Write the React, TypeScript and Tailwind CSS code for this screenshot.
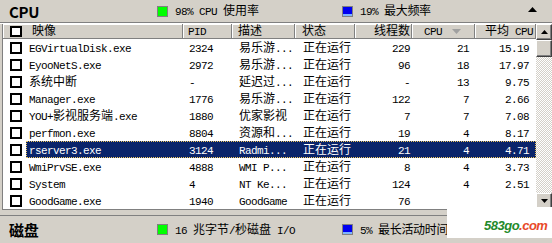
import React from 'react';

type Proc = {
  name: string;
  pid: string;
  desc: string;
  status: string;
  threads: string;
  cpu: string;
  avg: string;
  selected?: boolean;
};

const processes: Proc[] = [
  { name: 'EGVirtualDisk.exe', pid: '2324', desc: '易乐游...', status: '正在运行', threads: '229', cpu: '21', avg: '15.19' },
  { name: 'EyooNetS.exe', pid: '2972', desc: '易乐游...', status: '正在运行', threads: '96', cpu: '18', avg: '17.97' },
  { name: '系统中断', pid: '-', desc: '延迟过...', status: '正在运行', threads: '-', cpu: '13', avg: '9.75' },
  { name: 'Manager.exe', pid: '1776', desc: '易乐游...', status: '正在运行', threads: '122', cpu: '7', avg: '2.66' },
  { name: 'YOU+影视服务端.exe', pid: '1880', desc: '优家影视', status: '正在运行', threads: '7', cpu: '7', avg: '7.08' },
  { name: 'perfmon.exe', pid: '8804', desc: '资源和...', status: '正在运行', threads: '19', cpu: '4', avg: '8.17' },
  { name: 'rserver3.exe', pid: '3124', desc: 'Radmi...', status: '正在运行', threads: '21', cpu: '4', avg: '4.71', selected: true },
  { name: 'WmiPrvSE.exe', pid: '4888', desc: 'WMI P...', status: '正在运行', threads: '8', cpu: '4', avg: '3.73' },
  { name: 'System', pid: '4', desc: 'NT Ke...', status: '正在运行', threads: '124', cpu: '4', avg: '2.51' },
  { name: 'GoodGame.exe', pid: '1940', desc: 'GoodGame', status: '正在运行', threads: '76', cpu: '3', avg: '1.92' },
];

const CJK = /([\u2e80-\u9fff\uff00-\uffef]+)/;

// SimSun-like mix: latin runs narrower than the CJK runs
const Txt: React.FC<{ s: string }> = ({ s }) => (
  <span className="whitespace-nowrap">
    {s
      .split(CJK)
      .filter(Boolean)
      .map((part, i) =>
        CJK.test(part) ? (
          <span key={i} className="text-[12px]">{part}</span>
        ) : (
          <span key={i} className="text-[11px] tracking-[-0.6px] whitespace-pre">{part}</span>
        )
      )}
  </span>
);

const CheckBox: React.FC<{ small?: boolean }> = ({ small }) => (
  <div className={small ? 'w-[12px] h-[11px] border-2 border-black bg-white' : 'w-[12px] h-[12px] border-2 border-black bg-white'} />
);

const Marker: React.FC<{ color: 'green' | 'blue' }> = ({ color }) =>
  color === 'green' ? (
    <div className="w-[11px] h-[11px] border border-[#808080] bg-[#00ff00]" />
  ) : (
    <div className="w-[11px] h-[11px] border border-[#808080] bg-[#0000f0] flex flex-col justify-end">
      <div className="h-[2px] bg-[#7fb4ff]" />
    </div>
  );

const Raised: React.FC<{ className?: string; children?: React.ReactNode }> = ({ className = '', children }) => (
  <div
    className={`bg-[#d4d0c8] border border-t-white border-l-white border-r-[#404040] border-b-[#404040] shadow-[inset_-1px_-1px_0_#808080] flex items-center justify-center ${className}`}
  >
    {children}
  </div>
);

const SummaryBar: React.FC<{ title: string; a: string; b: string; arrow?: boolean }> = ({ title, a, b, arrow }) => (
  <div className="flex items-center h-full">
    <div className="w-[157px] pl-[9px] text-[15px] font-bold font-['Noto_Sans_CJK_SC',sans-serif] leading-none tracking-[-0.3px]">
      {title}
    </div>
    <div className="w-[185px] flex items-center gap-[7px]">
      <Marker color="green" />
      <span className="leading-none"><Txt s={a} /></span>
    </div>
    <div className="w-[186px] flex items-center gap-[7px]">
      <Marker color="blue" />
      <span className="leading-none tracking-[-0.3px]"><Txt s={b} /></span>
    </div>
    {arrow && (
      <svg width="9" height="5" viewBox="0 0 9 5" className="mb-[4px]">
        <polygon points="0,5 4.5,0 9,5" fill="#000" />
      </svg>
    )}
  </div>
);

const cols = 'grid grid-cols-[157px_49px_63px_60px_57px_63px_61px] items-center';
const headCell = 'h-full shrink-0 flex items-center border-r border-[#808080] shadow-[inset_1px_1px_0_#fff]';

const HeaderRow: React.FC = () => (
  <div className="flex h-[15px] bg-[#d4d0c8] border-b border-[#808080] leading-none">
    <div className={`w-[180px] ${headCell}`}>
      <div className="w-[26px] pl-[7px] flex items-center"><CheckBox small /></div>
      <span className="pl-[3px]"><Txt s="映像" /></span>
    </div>
    <div className={`w-[49px] pl-[5px] ${headCell}`}>
      <Txt s="PID" />
    </div>
    <div className={`w-[63px] pl-[6px] ${headCell}`}>
      <Txt s="描述" />
    </div>
    <div className={`w-[60px] pl-[7px] ${headCell}`}>
      <Txt s="状态" />
    </div>
    <div className={`w-[57px] justify-end pr-[1px] ${headCell}`}>
      <Txt s="线程数" />
    </div>
    <div className={`w-[63px] pl-[12px] ${headCell}`}>
      <Txt s="CPU" />
      <svg width="9" height="5" viewBox="0 0 9 5" className="ml-[10px] shrink-0">
        <polygon points="0,0 9,0 4.5,5" fill="#a0a0a0" />
      </svg>
    </div>
    <div className={`w-[61px] justify-end pr-[2px] ${headCell}`}>
      <Txt s="平均 CPU" />
    </div>
  </div>
);

const ProcRow: React.FC<{ p: Proc }> = ({ p }) => (
  <div className="flex h-[17px] bg-white leading-none">
    <div className="w-[23px] h-full flex items-center pl-[7px]">
      <CheckBox />
    </div>
    <div
      className={
        p.selected
          ? `${cols} h-full bg-[#0a246a] text-white outline outline-1 outline-dotted outline-[#f0c860] -outline-offset-1`
          : `${cols} h-full text-black`
      }
    >
      <div className="pl-[3px] overflow-hidden"><Txt s={p.name} /></div>
      <div className="pl-[6px]"><Txt s={p.pid} /></div>
      <div className="pl-[7px] overflow-hidden"><Txt s={p.desc} /></div>
      <div className="pl-[8px]"><Txt s={p.status} /></div>
      <div className="text-right pr-[2px]"><Txt s={p.threads} /></div>
      <div className="text-right pr-[6px]"><Txt s={p.cpu} /></div>
      <div className="text-right pr-[7px]"><Txt s={p.avg} /></div>
    </div>
  </div>
);

const ScrollBar: React.FC = () => (
  <div className="w-[16px] flex flex-col h-[185px]">
    <Raised className="h-[16px]">
      <svg width="7" height="4" viewBox="0 0 7 4">
        <polygon points="0,4 3.5,0 7,4" fill="#000" />
      </svg>
    </Raised>
    <Raised className="h-[17px]" />
    <div className="flex-1 bg-[repeating-conic-gradient(#ffffff_0_25%,#d4d0c8_0_50%)] bg-[length:2px_2px]" />
    <Raised className="h-[16px]">
      <svg width="7" height="4" viewBox="0 0 7 4">
        <polygon points="0,0 7,0 3.5,4" fill="#000" />
      </svg>
    </Raised>
  </div>
);

const App: React.FC = () => {
  return (
    <div className="w-[552px] h-[243px] bg-[#d4d0c8] text-black relative overflow-hidden font-['Liberation_Mono','Noto_Sans_CJK_SC',monospace]">
      <div className="h-[22px]">
        <SummaryBar title="CPU" a="98% CPU 使用率" b="19% 最大频率" arrow />
      </div>
      <div className="h-[2px] border-t border-[#808080] border-b border-b-white" />

      <div className="flex ml-[2px] border-l border-[#808080] h-[185px]">
        <div className="w-[533px] flex flex-col">
          <HeaderRow />
          {processes.map((p) => (
            <ProcRow key={p.name} p={p} />
          ))}
        </div>
        <ScrollBar />
      </div>
      <div className="h-[1px] ml-[2px] bg-[#808080]" />
      <div className="h-[5px]" />
      <div className="h-[1px] bg-[#808080]" />

      <div className="h-[27px]">
        <SummaryBar title="磁盘" a="16 兆字节/秒磁盘 I/O" b="5% 最长活动时间" />
      </div>

      {/* watermark */}
      <div className="absolute left-[447px] top-[198px] w-[89px] h-[40px] bg-white" />
      <div className="absolute left-[536px] top-[207px] w-[16px] h-[31px] bg-white" />
      <div className="absolute left-[484px] top-[219px] text-[13px] font-bold italic tracking-[-0.5px] leading-none font-['Liberation_Sans',sans-serif]">
        <span className="text-[#238a2a]">583go</span>
        <span className="text-[#e8492a]">.com</span>
      </div>
    </div>
  );
};

export default App;
